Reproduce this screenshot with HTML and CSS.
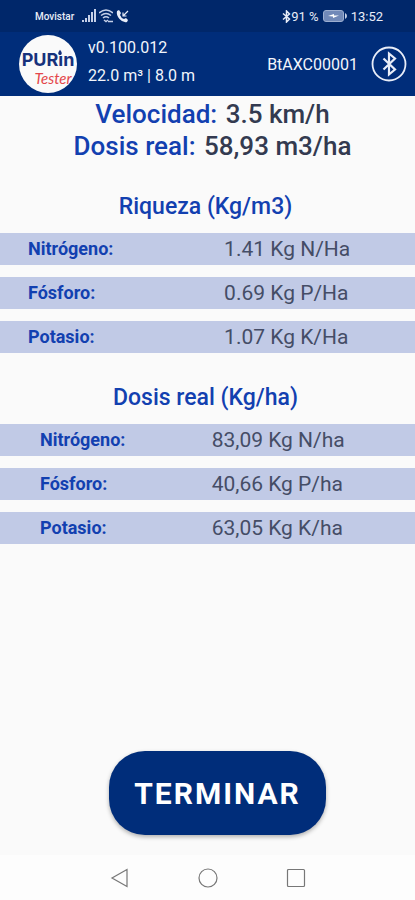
FILE: index.html
```html
<!DOCTYPE html>
<html lang="es">

<head>
  <meta charset="UTF-8">
  <meta name="viewport" content="width=device-width, initial-scale=1.0">
  <title>Purin Tester</title>
  <link rel="stylesheet" href="styles.css">
</head>

<body>
  <div class="statusBar">
    <div class="statusLeft">
      <span class="carrier">Movistar</span>
      <svg width="14" height="14" viewBox="0 0 14 14" fill="#c5d0e8">
        <path d="M0 11h2v2H0zM3 9h2v4H3zM6 6h2v7H6zM9 3h2v10H9zM12 0h2v13h-2z" />
      </svg>
      <svg width="14" height="14" viewBox="0 0 14 14" fill="none" stroke="#c5d0e8" stroke-width="1.5">
        <path d="M0 4q7-6 14 0M2 6.500q5-4 10 0M4 9q3-2.500 6 0M5 11l2 1.500 2-1.500M9 12.500h5" />
      </svg>
      <svg width="13" height="13" viewBox="0 0 13 13">
        <path d="M1 1l2-1 2 3-1 2q1 3 4 4l2-1 2 2-1 2Q7 13 3.500 9T1 1z" fill="#e8edf8" />
        <path d="M12 1L7 6M7 2.500V6h3.500" fill="none" stroke="#e8edf8" stroke-width="1.200" />
      </svg>
    </div>
    <div class="statusRight">
      <svg width="9" height="13" viewBox="0 0 9 13" fill="none" stroke="#e8edf8" stroke-width="1.500">
        <path d="M1 3.500l6.500 5.500L4.500 12V1l3 3L1 9.500" />
      </svg>
      <span>91 %</span>
      <svg class="battery" width="24" height="12" viewBox="0 0 24 12">
        <rect x="0.500" y="0.500" width="20" height="11" rx="2.500" fill="#7189b8" stroke="#9caed0" />
        <path d="M22 3v6q2-1 2-3t-2-3z" fill="#c5d0e8" />
        <path d="M5 6l6-2v1.500h5L10 8V6.500z" fill="#fff" />
      </svg>
      <span>13:52</span>
    </div>
  </div>

  <header class="appBar">
    <div class="logo">
      <svg class="drop" width="4" height="7" viewBox="0 0 6 8">
        <path d="M3 0Q-1 5 1 7q2 1.500 4 0 2-2-2-7z" fill="#17327c" />
      </svg>
      <span class="logoPurin">PURın</span>
      <span class="logoTester">Tester</span>
    </div>
    <div class="info">
      <span>v0.100.012</span>
      <span>22.0 m³ | 8.0 m</span>
    </div>
    <span class="device">BtAXC00001</span>
    <button class="btBtn" aria-label="Bluetooth">
      <svg width="36" height="36" viewBox="0 0 36 36" fill="none" stroke="#e8edf8">
        <circle cx="18" cy="18" r="16.500" stroke-width="1.800" />
        <path d="M12.500 12.500l11.500 11L18 28.500v-21l6 5-11.500 11" stroke-width="2.200" />
      </svg>
    </button>
  </header>

  <main>
    <div class="summary">
      <p><span class="name">Velocidad:</span> 3.5 km/h</p>
      <p><span class="name">Dosis real:</span> 58,93 m3/ha</p>
    </div>

    <h2>Riqueza (Kg/m3)</h2>
    <table class="richness">
      <tr><th scope="row">Nitrógeno:</th><td>1.41 Kg N/Ha</td></tr>
      <tr><th scope="row">Fósforo:</th><td>0.69 Kg P/Ha</td></tr>
      <tr><th scope="row">Potasio:</th><td>1.07 Kg K/Ha</td></tr>
    </table>

    <h2>Dosis real (Kg/ha)</h2>
    <table class="dose">
      <tr><th scope="row">Nitrógeno:</th><td>83,09 Kg N/ha</td></tr>
      <tr><th scope="row">Fósforo:</th><td>40,66 Kg P/ha</td></tr>
      <tr><th scope="row">Potasio:</th><td>63,05 Kg K/ha</td></tr>
    </table>

    <button class="endBtn">TERMINAR</button>
  </main>

  <nav class="navBar">
    <button aria-label="Atrás">
      <svg width="20" height="20" viewBox="0 0 20 20">
        <path d="M17 1.500v17L2 10z" />
      </svg>
    </button>
    <button aria-label="Inicio">
      <svg width="20" height="20" viewBox="0 0 20 20">
        <circle cx="10" cy="10" r="9" />
      </svg>
    </button>
    <button aria-label="Recientes">
      <svg width="20" height="20" viewBox="0 0 20 20">
        <rect x="1.500" y="1.500" width="17" height="17" rx="1" />
      </svg>
    </button>
  </nav>
</body>

</html>
```
FILE: styles.css
```css
* {
  box-sizing: border-box;
}

body {
  margin: 0;
  min-height: 100vh;
  display: flex;
  flex-direction: column;
  font-family: Roboto, "Liberation Sans", sans-serif;
  background-color: #fafafa;
}

button {
  padding: 0;
  border: none;
  background: none;
  font-family: inherit;
  cursor: pointer;
}

svg {
  display: block;
}

.statusBar {
  height: 32px;
  padding: 0 32px 0 35px;
  display: flex;
  align-items: center;
  justify-content: space-between;
  font-size: 13px;
  color: #e8edf8;
  background-color: #00276a;
}

.statusLeft {
  display: flex;
  align-items: center;
  gap: 3px;
}

.carrier {
  margin-right: 5px;
  font-size: 10px;
  font-weight: 500;
}

.statusRight {
  display: flex;
  align-items: center;
}

.battery {
  margin: 0 4px;
}

.appBar {
  height: 64px;
  padding: 0 8px 0 19px;
  display: flex;
  align-items: center;
  color: #f2f5fc;
  background-color: #002d7a;
}

.logo {
  position: relative;
  flex: none;
  width: 58px;
  height: 58px;
  padding-top: 16px;
  display: flex;
  flex-direction: column;
  align-items: center;
  border-radius: 50%;
  background-color: #fafafa;
}

/* la gota hace de punto de la i */
.drop {
  position: absolute;
  top: 14px;
  left: 39px;
}

.logoPurin {
  font-family: Inter, sans-serif;
  font-size: 18px;
  font-weight: 700;
  line-height: 18px;
  color: #17327c;
}

.logoTester {
  margin-left: 10px;
  font-family: Lato, sans-serif;
  font-size: 15px;
  font-style: italic;
  line-height: 18px;
  color: #e4474b;
}

.info {
  margin: 0 0 4px 11px;
  display: flex;
  flex-direction: column;
  gap: 8px;
  font-size: 16px;
  line-height: 20px;
  white-space: nowrap;
}

.device {
  margin-left: auto;
  margin-right: 13px;
  font-size: 16px;
}

main {
  flex: 1;
  display: flex;
  flex-direction: column;
}

.summary {
  padding: 2px 0 0 10px;
  font-size: 26px;
  font-weight: 500;
  line-height: 32px;
  text-align: center;
  color: #333a50;
}

.summary p {
  margin: 0;
}

.name {
  margin-right: 2px;
  color: #1240b0;
}

h2 {
  margin: 31px 4px 0 0;
  font-size: 23px;
  font-weight: 500;
  line-height: 28px;
  text-align: center;
  color: #1240b0;
}

/* las filas quedan como bandas separadas */
table {
  width: 100%;
  table-layout: fixed;
  border-spacing: 0 12px;
  line-height: 32px;
}

tr {
  background-color: #c1cae6;
}

th {
  padding: 0 0 0 28px;
  font-size: 18px;
  font-weight: 700;
  text-align: left;
  color: #1240b0;
}

td {
  padding: 0;
  font-size: 21px;
  color: #454d66;
}

.richness {
  margin-bottom: -12px;
}

.richness th {
  width: 54%;
}

.dose th {
  width: 51%;
  padding-left: 40px;
}

.endBtn {
  align-self: center;
  margin: auto 0 20px 20px;
  width: 217px;
  height: 84px;
  border-radius: 36px;
  font-size: 30px;
  font-weight: 700;
  letter-spacing: 2px;
  color: #fff;
  background-color: #002d7a;
  box-shadow: 0 2px 4px rgba(0, 0, 0, 0.3);
}

.navBar {
  height: 45px;
  display: flex;
  align-items: center;
  justify-content: center;
  gap: 68px;
  background-color: #fdfdfd;
}

.navBar svg {
  fill: none;
  stroke: #777;
  stroke-width: 1.2;
}
```
